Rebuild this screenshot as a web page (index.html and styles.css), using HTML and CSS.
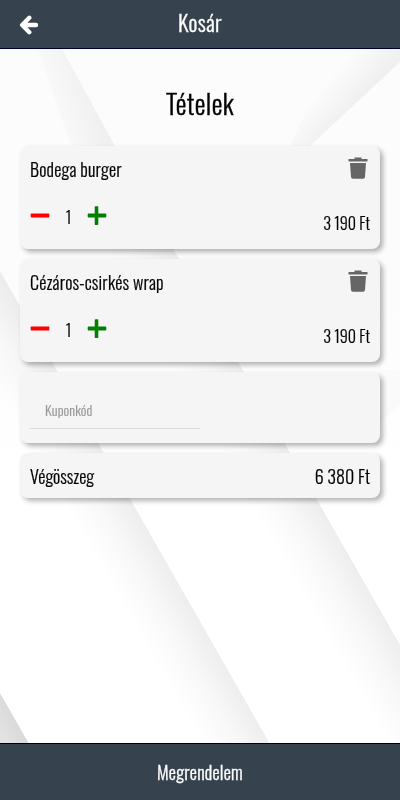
FILE: index.html
```html
<!DOCTYPE html>
<html lang="hu">
<head>
<meta charset="utf-8">
<meta name="viewport" content="width=device-width, initial-scale=1">
<title>Kosár</title>
<link rel="stylesheet" href="styles.css">
</head>
<body>
<svg class="backdrop" viewBox="0 0 400 800" aria-hidden="true">
  <defs>
    <linearGradient id="base" x1="0" y1="0" x2="0" y2="1"><stop offset="0" stop-color="#fcfcfc"/><stop offset=".35" stop-color="#fcfcfc"/><stop offset=".6" stop-color="#fff"/></linearGradient>
    <linearGradient id="foldA" gradientUnits="userSpaceOnUse" x1="78" y1="530" x2="130" y2="500"><stop offset="0" stop-color="#dcdcdc" stop-opacity="0"/><stop offset=".5" stop-color="#dcdcdc" stop-opacity=".18"/><stop offset="1" stop-color="#dcdcdc" stop-opacity=".5"/></linearGradient>
    <linearGradient id="foldB" gradientUnits="userSpaceOnUse" x1="265" y1="530" x2="317" y2="500"><stop offset="0" stop-color="#dcdcdc" stop-opacity="0"/><stop offset=".5" stop-color="#dcdcdc" stop-opacity=".18"/><stop offset="1" stop-color="#dcdcdc" stop-opacity=".5"/></linearGradient>
    <linearGradient id="foldTop" gradientUnits="userSpaceOnUse" x1="45" y1="88" x2="86" y2="75"><stop offset="0" stop-color="#fafafa"/><stop offset="1" stop-color="#f0f0f0"/></linearGradient>
    <linearGradient id="corner" gradientUnits="userSpaceOnUse" x1="328" y1="80" x2="355" y2="104"><stop offset="0" stop-color="#e4e4e4" stop-opacity="0"/><stop offset="1" stop-color="#e4e4e4" stop-opacity=".5"/></linearGradient>
    <linearGradient id="dark" gradientUnits="userSpaceOnUse" x1="0" y1="730" x2="20" y2="720"><stop offset="0" stop-color="#e2e2e2"/><stop offset="1" stop-color="#d8d8d8"/></linearGradient>
  </defs>
  <rect width="400" height="800" fill="url(#base)"/>
  <path d="M0 271 302 800H0Z" fill="url(#foldA)"/>
  <path d="M114 145 400 645V800H302L62 380Z" fill="url(#foldB)"/>
  <path d="M38 49H62L115 146H71Z" fill="url(#foldTop)"/>
  <path d="M310 146 400 62V49H335L290 146Z" fill="url(#corner)"/>
  <path d="M380 422 400 405V370H380Z" fill="#fafafa"/>
  <path d="M0 693 61 800H0Z" fill="url(#dark)"/>
</svg>
<div class="app">
  <header class="bar top">
    <svg class="back" viewBox="0 0 20 20"><path d="M10.300 2.800 3.200 10l7.100 7.200M4.200 10H17" fill="none" stroke="#fff" stroke-width="4.400" stroke-linecap="round" stroke-linejoin="round"/></svg>
    <span class="kosar">Kosár</span>
  </header>
  <main>
    <h1>Tételek</h1>
    <section class="card item">
      <div class="row"><span class="name">Bodega burger</span>
        <svg class="trash" viewBox="0 0 20 22"><path d="M.5 2H6.500V.5H13.500V2H19.500V4.500H.5ZM2 6H18L17 20Q16.900 21.800 15 21.800H5Q3.100 21.800 3 20Z"/></svg></div>
      <div class="row low">
        <div class="qty"><svg class="minus" viewBox="0 0 20 20"><rect x=".7" y="7.500" width="18.600" height="4" rx=".8"/></svg><span class="count">1</span><svg class="plus" viewBox="0 0 20 20"><path d="M8.500.2h2q.8 0 .8.800V7.500h7.200q.8 0 .8.800v2.400q0 .8-.8.800h-7.200v6.700q0 .8-.8.800h-2q-.8 0-.8-.8V11.500H1.500q-.8 0-.8-.8V8.300q0-.8.800-.8h6.200V1q0-.8.800-.8Z"/></svg></div>
        <span class="price">3 190 Ft</span>
      </div>
    </section>
    <section class="card item">
      <div class="row"><span class="name">Cézáros-csirkés wrap</span>
        <svg class="trash" viewBox="0 0 20 22"><path d="M.5 2H6.500V.5H13.500V2H19.500V4.500H.5ZM2 6H18L17 20Q16.900 21.800 15 21.800H5Q3.100 21.800 3 20Z"/></svg></div>
      <div class="row low">
        <div class="qty"><svg class="minus" viewBox="0 0 20 20"><rect x=".7" y="7.500" width="18.600" height="4" rx=".8"/></svg><span class="count">1</span><svg class="plus" viewBox="0 0 20 20"><path d="M8.500.2h2q.8 0 .8.800V7.500h7.200q.8 0 .8.800v2.400q0 .8-.8.800h-7.200v6.700q0 .8-.8.800h-2q-.8 0-.8-.8V11.500H1.500q-.8 0-.8-.8V8.300q0-.8.800-.8h6.200V1q0-.8.800-.8Z"/></svg></div>
        <span class="price">3 190 Ft</span>
      </div>
    </section>
    <section class="card coupon"><div class="field">Kuponkód</div></section>
    <section class="card total"><span>Végösszeg</span><span class="sum">6 380 Ft</span></section>
  </main>
  <footer class="bar bottom"><span class="order">Megrendelem</span></footer>
</div>
</body>
</html>
```
FILE: styles.css
```css
* { box-sizing: border-box; }
body { margin: 0; font-family: Oswald, Roboto, sans-serif; font-weight: 300; color: #000; overflow: hidden; -webkit-text-stroke: .2px currentColor; }
.backdrop { position: fixed; top: 0; left: 0; width: 400px; height: 800px; z-index: -1; }
.app { height: 800px; display: flex; flex-direction: column; }
.bar { background: #36424e; color: #fff; display: flex; align-items: center; justify-content: center; flex: none; }
.top { height: 49px; border-bottom: 1px solid #000030; display: grid; grid-template-columns: 40px 1fr 40px; }
.bottom { height: 57px; border-top: 1px solid #000; }
.back { width: 20px; height: 20px; margin: 1px 0 0 19px; }
.kosar { font-size: 22px; letter-spacing: .4px; line-height: 30px; justify-self: center; margin-top: -4px; -webkit-text-stroke-width: .35px; }
.order { font-size: 18px; letter-spacing: .25px; line-height: 30px; -webkit-text-stroke-width: .35px; }
main { flex: 1; padding: 0 20px; display: flex; flex-direction: column; gap: 10px; }
h1 { margin: 0; height: 87px; padding-top: 34px; text-align: center; font-weight: 300; font-size: 27px; letter-spacing: .4px; line-height: 40px; -webkit-text-stroke-width: .4px; }
.card { background: #f5f5f5; border-radius: 8px; padding: 0 10px; box-shadow: 3px 3px 5px rgba(0, 0, 0, .3); flex: none; }
.item { height: 103px; padding-top: 9px; display: flex; flex-direction: column; justify-content: space-between; }
.row { display: flex; justify-content: space-between; align-items: flex-start; }
.name { font-size: 18px; letter-spacing: .17px; line-height: 30px; margin-top: -1px; }
.trash { width: 20px; height: 22px; margin: 2px 2px 0 0; fill: #666; }
.low { height: 49px; }
.qty { display: flex; align-items: center; height: 20px; margin-top: 6px; }
.minus, .plus { width: 20px; height: 20px; }
.minus { fill: red; }
.plus { fill: green; }
.count { font-size: 16px; width: 37px; line-height: 20px; text-align: center; padding-top: 2px; }
.price { font-size: 16px; line-height: 24px; margin-top: 11px; }
.coupon { height: 71px; padding-top: 24px; }
.field { width: 170px; height: 33px; padding-left: 15px; border-bottom: 1px solid #d9d9d9; color: #999; font-size: 14px; letter-spacing: .12px; line-height: 27px; }
.total { height: 45px; display: flex; justify-content: space-between; align-items: center; font-size: 18px; line-height: 30px; }
```
